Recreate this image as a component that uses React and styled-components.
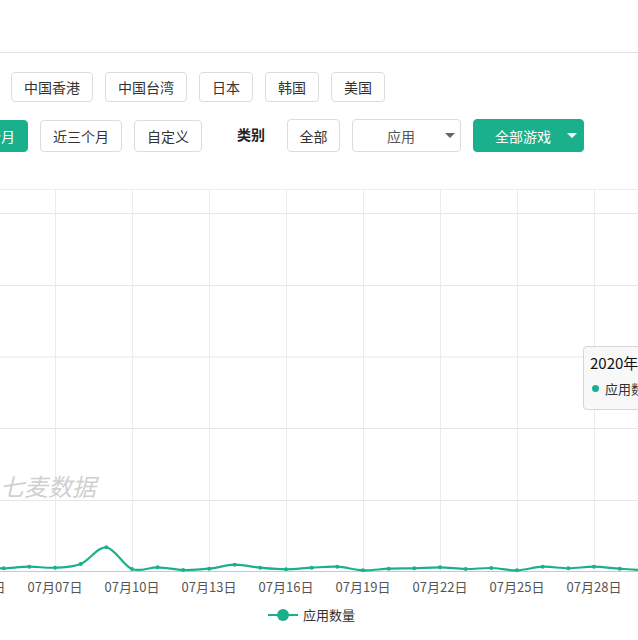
import React from "react";
import styled, { createGlobalStyle } from "styled-components";

const GREEN = "#1bb08c";

const GlobalStyle = createGlobalStyle`
  html, body {
    margin: 0;
    padding: 0;
    background: #fff;
    overflow: hidden;
    font-family: "Noto Sans CJK SC", "Noto Sans", sans-serif;
  }
`;

const Page = styled.div`
  width: 638px;
  height: 640px;
  overflow: hidden;
  background: #fff;
`;

const TopBar = styled.div`
  height: 52px;
  border-bottom: 1px solid #e2e2e2;
`;

const FilterRow = styled.div`
  display: flex;
  align-items: center;
  gap: 12px;
  margin-top: ${(p) => p.$top}px;
  margin-left: ${(p) => p.$shift}px;
  white-space: nowrap;
`;

const Chip = styled.div`
  flex: none;
  box-sizing: border-box;
  height: ${(p) => p.$h || 30}px;
  padding: 0 ${(p) => p.$px || 12}px;
  display: flex;
  align-items: center;
  justify-content: center;
  border: 1px solid ${(p) => (p.$active ? GREEN : "#dcdcdc")};
  border-radius: 4px;
  background: ${(p) => (p.$active ? GREEN : "#fff")};
  color: ${(p) => (p.$active ? "#fff" : "#333")};
  font-size: 14px;
`;

const Label = styled.span`
  flex: none;
  font-size: 14px;
  font-weight: bold;
  color: #222;
  margin: -4px 10px 0 23px;
`;

const Select = styled.div`
  flex: none;
  box-sizing: border-box;
  width: ${(p) => p.$w}px;
  height: 33px;
  display: flex;
  align-items: center;
  padding: 0 ${(p) => p.$pr}px 0 ${(p) => p.$pl}px;
  border: 1px solid ${(p) => (p.$green ? GREEN : "#dcdcdc")};
  border-radius: 4px;
  background: ${(p) => (p.$green ? GREEN : "#fff")};
  color: ${(p) => (p.$green ? "#fff" : "#555")};
  font-size: 14px;
`;

const Caret = styled.span`
  margin-left: auto;
  width: 0;
  height: 0;
  border-left: 5px solid transparent;
  border-right: 5px solid transparent;
  border-top: 5px solid ${(p) => (p.$light ? "#fff" : "#666")};
`;

const ChartWrap = styled.div`
  position: relative;
  margin-top: 18px;
  height: 470px;
`;

const Watermark = styled.div`
  position: absolute;
  left: 0;
  top: 298px;
  font-size: 24px;
  font-style: italic;
  color: #d0d0d0;
`;

const Tooltip = styled.div`
  position: absolute;
  left: 583px;
  top: 176px;
  width: 150px;
  height: 64px;
  box-sizing: border-box;
  padding: 5px 6px;
  border: 1px solid #d6d6d6;
  border-radius: 4px;
  background: rgba(248, 248, 248, 0.95);
  white-space: nowrap;
`;

const TipTitle = styled.div`
  font-size: 15px;
  color: #111;
  line-height: 22px;
`;

const TipRow = styled.div`
  display: flex;
  align-items: center;
  gap: 6px;
  margin-top: 5px;
  font-size: 13px;
  color: #333;
`;

const Dot = styled.span`
  width: 7px;
  height: 7px;
  border-radius: 50%;
  background: ${GREEN};
  margin-left: 2px;
`;

// y positions (page px) for each day starting 07/04
const points = [
  569, 568.3, 566.7, 567.7, 564, 547.3, 569, 567.3, 570, 568.7, 564.7, 567.7,
  569.3, 567.7, 566.7, 570.3, 568.7, 568.3, 567.3, 569, 568, 570.3, 566.7,
  568.3, 566.7, 568.7, 570, 569,
];

const DAY = 77 / 3;
const X0 = -22;

function smoothPath(pts) {
  let d = `M${pts[0][0]},${pts[0][1]}`;
  for (let i = 0; i < pts.length - 1; i++) {
    const p0 = pts[i - 1] || pts[i];
    const p1 = pts[i];
    const p2 = pts[i + 1];
    const p3 = pts[i + 2] || p2;
    const c1x = p1[0] + (p2[0] - p0[0]) / 6;
    const c1y = p1[1] + (p2[1] - p0[1]) / 6;
    const c2x = p2[0] - (p3[0] - p1[0]) / 6;
    const c2y = p2[1] - (p3[1] - p1[1]) / 6;
    d += ` C${c1x},${c1y} ${c2x},${c2y} ${p2[0]},${p2[1]}`;
  }
  return d;
}

const Chart = () => {
  const pts = points.map((y, i) => [X0 + i * DAY, y]);
  const vLines = [];
  for (let k = -1; k <= 7; k++) vLines.push(55 + 77 * k);
  const hLines = [213, 285, 356.5, 428, 500];
  const labels = ["07月04日", "07月07日", "07月10日", "07月13日", "07月16日", "07月19日", "07月22日", "07月25日", "07月28日"];

  return (
    <svg width="638" height="470" viewBox="0 170 638 470" style={{ display: "block" }}>
      <line x1="0" x2="638" y1="189.5" y2="189.5" stroke="#ececec" />
      {hLines.map((y) => (
        <line key={y} x1="0" x2="638" y1={y + 0.5} y2={y + 0.5} stroke="#e6e6e6" />
      ))}
      {vLines.map((x) => (
        <line key={x} x1={x + 0.5} x2={x + 0.5} y1="189" y2="571" stroke="#ececec" />
      ))}
      <line x1="0" x2="638" y1="571.5" y2="571.5" stroke="#c8c8c8" />
      <path d={smoothPath(pts)} fill="none" stroke={GREEN} strokeWidth="2.2" />
      {pts.map(([x, y], i) => (
        <circle key={i} cx={x} cy={y} r="2" fill={GREEN} />
      ))}
      {labels.map((t, i) => (
        <text
          key={t}
          x={vLines[i]}
          y="592"
          textAnchor="middle"
          fontSize="13"
          fill="#555"
          fontFamily='"Noto Sans CJK SC", sans-serif'
        >
          {t}
        </text>
      ))}
      <line x1="268" x2="298" y1="615" y2="615" stroke={GREEN} strokeWidth="2" />
      <circle cx="283" cy="615" r="6" fill={GREEN} />
      <text x="303" y="620" fontSize="13" fill="#333" fontFamily='"Noto Sans CJK SC", sans-serif'>
        应用数量
      </text>
    </svg>
  );
};

const App = () => {
  return (
    <Page>
      <GlobalStyle />
      <TopBar />
      <FilterRow $top={19} $shift={-83}>
        <Chip>中国大陆</Chip>
        <Chip>中国香港</Chip>
        <Chip>中国台湾</Chip>
        <Chip>日本</Chip>
        <Chip>韩国</Chip>
        <Chip>美国</Chip>
      </FilterRow>
      <FilterRow $top={17} $shift={-54}>
        <Chip $active $h={32}>近一个月</Chip>
        <Chip $h={32}>近三个月</Chip>
        <Chip $h={32}>自定义</Chip>
        <Label>类别</Label>
        <Chip $h={33} $px={11.5}>全部</Chip>
        <Select $w={109} $pl={34} $pr={5}>
          应用
          <Caret />
        </Select>
        <Select $green $w={111} $pl={21} $pr={6}>
          全部游戏
          <Caret $light />
        </Select>
      </FilterRow>
      <ChartWrap>
        <Chart />
        <Watermark>七麦数据</Watermark>
        <Tooltip>
          <TipTitle>2020年07月30日</TipTitle>
          <TipRow>
            <Dot />
            应用数量: 7
          </TipRow>
        </Tooltip>
      </ChartWrap>
    </Page>
  );
};

export default App;
